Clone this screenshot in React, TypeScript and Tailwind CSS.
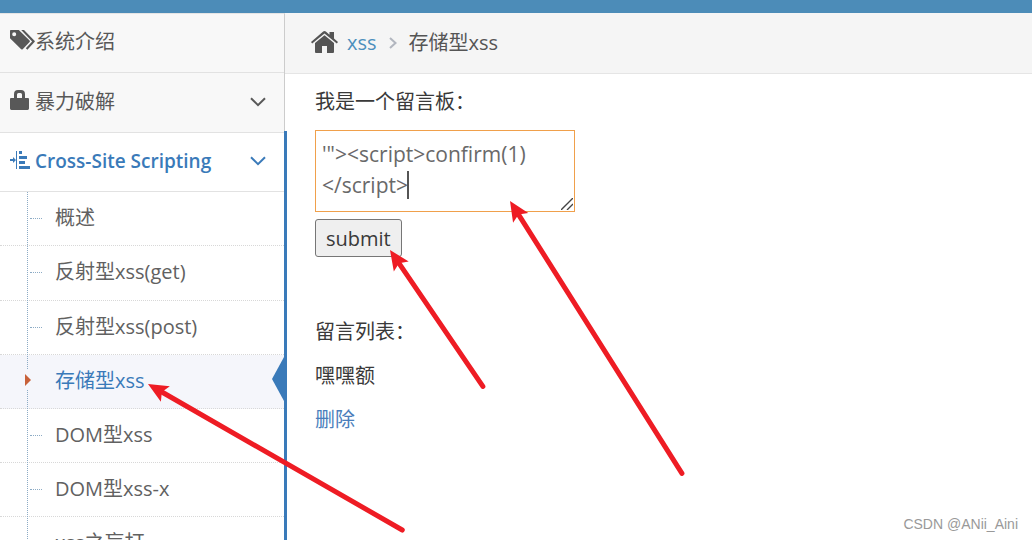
import React, { useState } from 'react';
import clsx from 'clsx';

interface IconProps {
  className?: string;
}

interface ArrowProps {
  from: [number, number];
  to: [number, number];
}

const subItems = ['概述', '反射型xss(get)', '反射型xss(post)', '存储型xss', 'DOM型xss', 'DOM型xss-x', 'xss之盲打'];

function TagsIcon({ className }: IconProps) {
  return (
    <svg viewBox="0 0 25 20" fill="currentColor" className={className} aria-hidden="true">
      <path
        fillRule="evenodd"
        d="M0 .8Q0 0 .8 0H8.8L19.6 10.6Q20.3 11.3 19.6 12L12.7 19.2Q12 20 11.2 19.2L0 8.3ZM4.2 2.2a2 2 0 1 0 0 4a2 2 0 1 0 0-4Z"
      />
      <path d="M11.2 0H14L24.5 10.7Q25.2 11.4 24.5 12.1L17.4 19.8L15.8 18.3L22.1 11.5Z" />
    </svg>
  );
}

function LockIcon({ className }: IconProps) {
  return (
    <svg viewBox="0 0 19 20" fill="currentColor" className={className} aria-hidden="true">
      <path
        fillRule="evenodd"
        d="M4 8V4.2Q4 0 8 0H11Q15 0 15 4.2V8H18Q19 8 19 9V18.6Q19 20 17.6 20H1.4Q0 20 0 18.6V9Q0 8 1 8ZM7 8H12V4.6Q12 3 10.5 3H8.5Q7 3 7 4.6Z"
      />
    </svg>
  );
}

function IndentIcon({ className }: IconProps) {
  return (
    <svg viewBox="0 0 21 18" fill="currentColor" className={className} aria-hidden="true">
      <path d="M6 0H7V18H6ZM0 8H3V6L6 9L3 12V10H0ZM9 0H12V3H9ZM9 5H17V8H9ZM9 10H15V13H9ZM9 15H20V18H9Z" />
    </svg>
  );
}

function HomeIcon({ className }: IconProps) {
  return (
    <svg viewBox="0 0 27 22" fill="currentColor" className={className} aria-hidden="true">
      <path d="M13.5 0Q14.2 0 14.8.5L18.5 3.7V1H23V7.5L27 11L25.8 12.5L13.5 2.4L1.2 12.5L0 11L12.2.5Q12.8 0 13.5 0Z" />
      <path d="M13.5 4.2L23 12V21Q23 22 22 22H16V15H11V22H5Q4 22 4 21V12Z" />
    </svg>
  );
}

function ChevronDown({ className }: IconProps) {
  return (
    <svg viewBox="0 0 16 10" fill="none" stroke="currentColor" strokeWidth="2" className={className} aria-hidden="true">
      <path d="M1 1.2L8 8.2L15 1.2" />
    </svg>
  );
}

function Arrow({ from, to }: ArrowProps) {
  const dx = from[0] - to[0];
  const dy = from[1] - to[1];
  const length = Math.hypot(dx, dy);
  const angle = (Math.atan2(dy, dx) * 180) / Math.PI;

  return (
    <g transform={`translate(${to[0]} ${to[1]}) rotate(${angle})`}>
      <path d="M0 0L20 -9L16 0L20 9Z" fill="#ee1c24" />
      <path d={`M14 0H${length - 2}`} stroke="#ee1c24" strokeWidth="5" strokeLinecap="round" />
    </g>
  );
}

function Sidebar() {
  const row = 'flex w-full items-center border-b border-[#e2e2e2] pb-[2px] pl-[10px] pr-[18px] text-left';

  return (
    <nav className="relative w-[285px] shrink-0 border-r border-t border-r-[#ccc] border-t-[#e5e5e5] bg-white">
      <a href="#intro" className={clsx(row, 'h-[59px] bg-[#f8f8f8] text-[#585858]')}>
        <TagsIcon className="mb-1 h-5 w-[25px]" />
        <span>系统介绍</span>
      </a>
      <button type="button" className={clsx(row, 'h-[60px] bg-[#f8f8f8] text-[#585858]')}>
        <LockIcon className="mb-1 mr-[6px] h-5 w-[19px]" />
        <span className="flex-1">暴力破解</span>
        <ChevronDown className="h-[10px] w-4" />
      </button>
      <div className="relative">
        <button type="button" aria-expanded="true" className={clsx(row, 'h-[59px] text-[19px] font-semibold text-[#3a7ab9]')}>
          <IndentIcon className="mb-[2px] mr-[4px] h-[18px] w-[21px]" />
          <span className="flex-1">Cross-Site Scripting</span>
          <ChevronDown className="h-[10px] w-4" />
        </button>
        <ul className="relative">
          {subItems.map((item) => {
            const active = item === '存储型xss';
            return (
              <li
                key={item}
                className={clsx(
                  'relative h-[54px] border-b border-dotted border-[#d8d8d8] [&:nth-child(2)]:h-[55px]',
                  active ? 'bg-[#f5f6fb]' : 'bg-white'
                )}
              >
                <a
                  href="#lesson"
                  className={clsx('flex h-full items-center pb-[2px] pl-[55px]', active ? 'text-[#3a7ab9]' : 'text-[#616161]')}
                >
                  {item}
                </a>
                {!active && <span className="absolute left-[30px] top-[26px] w-3 border-t border-dotted border-[#8cabc5]" />}
              </li>
            );
          })}
          <li aria-hidden="true" className="absolute inset-y-0 left-[27px] border-l border-dotted border-[#8cabc5]" />
          <li aria-hidden="true" className="absolute left-[25px] top-[178px]">
            <svg viewBox="0 0 6 20" className="h-5 w-[6px]">
              <path d="M0 0H6V20H0Z" fill="#f5f6fb" />
              <path d="M0 4L6 10L0 16Z" fill="#c86139" />
            </svg>
          </li>
          <li aria-hidden="true" className="absolute right-0 top-[165px]">
            <svg viewBox="0 0 12 44" className="h-11 w-3">
              <path d="M12 0V44L0 22Z" fill="#3a7ab9" />
            </svg>
          </li>
        </ul>
        <span className="absolute -right-[3px] -top-[2px] bottom-0 w-[3px] bg-[#3a7ab9]" />
      </div>
    </nav>
  );
}

function MessageForm() {
  const [message, setMessage] = useState('\'"><script>confirm(1)\n</script>');

  return (
    <form onSubmit={(e) => e.preventDefault()}>
      <label htmlFor="message" className="block leading-[30px]">
        我是一个留言板：
      </label>
      <div className="relative mt-[13px] h-[82px] w-[260px]">
        <textarea
          id="message"
          value={message}
          onChange={(e) => setMessage(e.target.value)}
          className="block h-full w-full resize-none overflow-hidden border border-[#f0a04b] bg-white px-[6px] py-2 text-[21px] leading-[31px] text-[#696969] outline-none"
        />
        <span className="absolute left-[92px] top-[41px] h-7 w-[2px] bg-[#555]" />
        <svg viewBox="0 0 12 12" className="absolute bottom-[2px] right-[2px] h-3 w-3" stroke="#444" strokeWidth="1.4">
          <path d="M0 12L12 0M6 12L12 6" />
        </svg>
      </div>
      <button type="submit" className="mt-[7px] h-[38px] rounded-[3px] border border-[#767676] bg-[#efefef] px-[10px] pt-[2px] text-[20px] leading-[30px]">
        submit
      </button>
    </form>
  );
}

export default function App() {
  return (
    <div className="relative flex h-screen flex-col overflow-hidden bg-white font-['Open_Sans','Noto_Sans_CJK_SC',sans-serif] text-[20px] leading-[30px] text-[#393939]">
      <header className="h-[13px] shrink-0 bg-[#4c8cb8]" />
      <div className="flex flex-1 items-start">
        <Sidebar />
        <main className="min-w-0 flex-1">
          <nav className="flex h-[61px] items-center border-b border-[#e5e5e5] bg-[#f5f5f5] pl-[26px] text-[#555]">
            <HomeIcon className="mb-[2px] mr-[9px] h-[22px] w-[27px]" />
            <a href="#xss" className="text-[#4c8fbd]">
              xss
            </a>
            <svg viewBox="0 0 8 12" fill="none" stroke="#b2b6bf" strokeWidth="2" className="mx-3 h-3 w-2" aria-hidden="true">
              <path d="M1 1L6.5 6L1 11" />
            </svg>
            <span>存储型xss</span>
          </nav>
          <div className="px-[30px] pt-[13px]">
            <MessageForm />
            <div className="mt-[60px] flex flex-col items-start gap-[14px]">
              <p>留言列表：</p>
              <p>嘿嘿额</p>
              <a href="#delete" className="text-[#4a7ebb]">
                删除
              </a>
            </div>
          </div>
        </main>
      </div>
      <svg className="pointer-events-none absolute left-0 top-0 h-[540px] w-[1032px]" viewBox="0 0 1032 540" aria-hidden="true">
        <Arrow from={[404, 531]} to={[148, 384]} />
        <Arrow from={[484, 388]} to={[390, 250]} />
        <Arrow from={[683, 475]} to={[510, 201]} />
      </svg>
      <p className="absolute bottom-[6px] right-[14px] font-['Liberation_Sans',sans-serif] text-[14px] leading-5 text-[#999]">
        CSDN @ANii_Aini
      </p>
    </div>
  );
}
